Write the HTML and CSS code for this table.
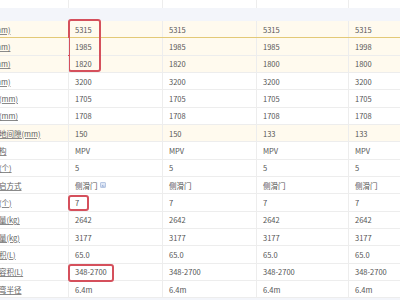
FILE: index.html
```html
<!DOCTYPE html>
<html lang="zh">
<head>
<meta charset="utf-8">
<link rel="stylesheet" href="styles.css">
</head>
<body>
<div class="sheet">
  <div class="row top"><div class="c lab"></div><div class="c"></div><div class="c"></div><div class="c"></div><div class="c"></div></div>
  <div class="band"></div>
  <div class="row hl gold"><div class="c lab"><span>长度(mm)</span></div><div class="c v"><span class="mark tall"></span>5315</div><div class="c v">5315</div><div class="c v">5315</div><div class="c v">5315</div></div>
  <div class="row hl"><div class="c lab"><span>宽度(mm)</span></div><div class="c v">1985</div><div class="c v">1985</div><div class="c v">1985</div><div class="c v">1998</div></div>
  <div class="row hl"><div class="c lab"><span>高度(mm)</span></div><div class="c v">1820</div><div class="c v">1820</div><div class="c v">1800</div><div class="c v">1800</div></div>
  <div class="row"><div class="c lab"><span>轴距(mm)</span></div><div class="c v">3200</div><div class="c v">3200</div><div class="c v">3200</div><div class="c v">3200</div></div>
  <div class="row"><div class="c lab"><span>前轮距(mm)</span></div><div class="c v">1705</div><div class="c v">1705</div><div class="c v">1705</div><div class="c v">1705</div></div>
  <div class="row"><div class="c lab"><span>后轮距(mm)</span></div><div class="c v">1708</div><div class="c v">1708</div><div class="c v">1708</div><div class="c v">1708</div></div>
  <div class="row hl"><div class="c lab"><span>最小离地间隙(mm)</span></div><div class="c v">150</div><div class="c v">150</div><div class="c v">133</div><div class="c v">133</div></div>
  <div class="row"><div class="c lab"><span>车身结构</span></div><div class="c v">MPV</div><div class="c v">MPV</div><div class="c v">MPV</div><div class="c v">MPV</div></div>
  <div class="row"><div class="c lab"><span>车门数(个)</span></div><div class="c v">5</div><div class="c v">5</div><div class="c v">5</div><div class="c v">5</div></div>
  <div class="row"><div class="c lab"><span>车门开启方式</span></div><div class="c v">侧滑门<svg class="pic" viewBox="0 0 6 6"><rect x="0.5" y="0.5" width="5" height="5" rx="0.6" fill="#dfe7f5" stroke="#9fb3d8" stroke-width="0.7"/><path d="M1.3 4.6 L2.6 3 L3.5 4 L4.1 3.4 L4.8 4.6Z" fill="#8aa2cf"/></svg></div><div class="c v">侧滑门</div><div class="c v">侧滑门</div><div class="c v">侧滑门</div></div>
  <div class="row"><div class="c lab"><span>座位数(个)</span></div><div class="c v"><span class="mark one"></span>7</div><div class="c v">7</div><div class="c v">7</div><div class="c v">7</div></div>
  <div class="row"><div class="c lab"><span>整备质量(kg)</span></div><div class="c v">2642</div><div class="c v">2642</div><div class="c v">2642</div><div class="c v">2642</div></div>
  <div class="row"><div class="c lab"><span>满载质量(kg)</span></div><div class="c v">3177</div><div class="c v">3177</div><div class="c v">3177</div><div class="c v">3177</div></div>
  <div class="row"><div class="c lab"><span>油箱容积(L)</span></div><div class="c v">65.0</div><div class="c v">65.0</div><div class="c v">65.0</div><div class="c v">65.0</div></div>
  <div class="row"><div class="c lab"><span>行李厢容积(L)</span></div><div class="c v"><span class="mark wide"></span>348-2700</div><div class="c v">348-2700</div><div class="c v">348-2700</div><div class="c v">348-2700</div></div>
  <div class="row"><div class="c lab"><span>最小转弯半径</span></div><div class="c v">6.4m</div><div class="c v">6.4m</div><div class="c v">6.4m</div><div class="c v">6.4m</div></div>
  <div class="band"></div>
</div>
</body>
</html>
```

FILE: styles.css
```css
html, body {
  margin: 0;
  padding: 0;
  background: #ffffff;
  overflow: hidden;
}
body {
  width: 400px;
  height: 300px;
  font-family: "Noto Sans CJK SC", "Noto Sans", sans-serif;
  font-size: 7.5px;
  color: #555555;
}
.sheet {
  margin-left: -31px;
  width: 460px;
}
.row {
  display: grid;
  grid-template-columns: 100px 94px 94px 92px 140px;
  height: 17.33px;
  border-bottom: 1px solid #ededed;
  box-sizing: border-box;
}
.row.top {
  height: 8px;
  border-bottom: none;
}
.row.hl {
  background: #fffaee;
}
.row.gold {
  border-bottom-color: #e3c977;
}
.band {
  height: 13px;
  background: #f3f5fa;
}
.c {
  position: relative;
  border-right: 1px solid #ededed;
  display: flex;
  align-items: center;
  padding-left: 6px;
  white-space: nowrap;
}
.lab {
  padding-left: 7.5px;
  color: #606060;
}
.lab span {
  text-decoration: underline;
  text-decoration-color: #8a8a8a;
  text-underline-offset: 1px;
}
.pic {
  width: 6px;
  height: 6px;
  margin-left: 2px;
}
.mark {
  position: absolute;
  left: -1px;
  border: 2px solid #d5505c;
  border-radius: 3px;
  box-sizing: border-box;
}
.mark.tall {
  top: -2px;
  width: 33px;
  height: 53px;
}
.mark.one {
  top: 1px;
  width: 21px;
  height: 16px;
}
.mark.wide {
  top: 0px;
  width: 46px;
  height: 18px;
}
```
